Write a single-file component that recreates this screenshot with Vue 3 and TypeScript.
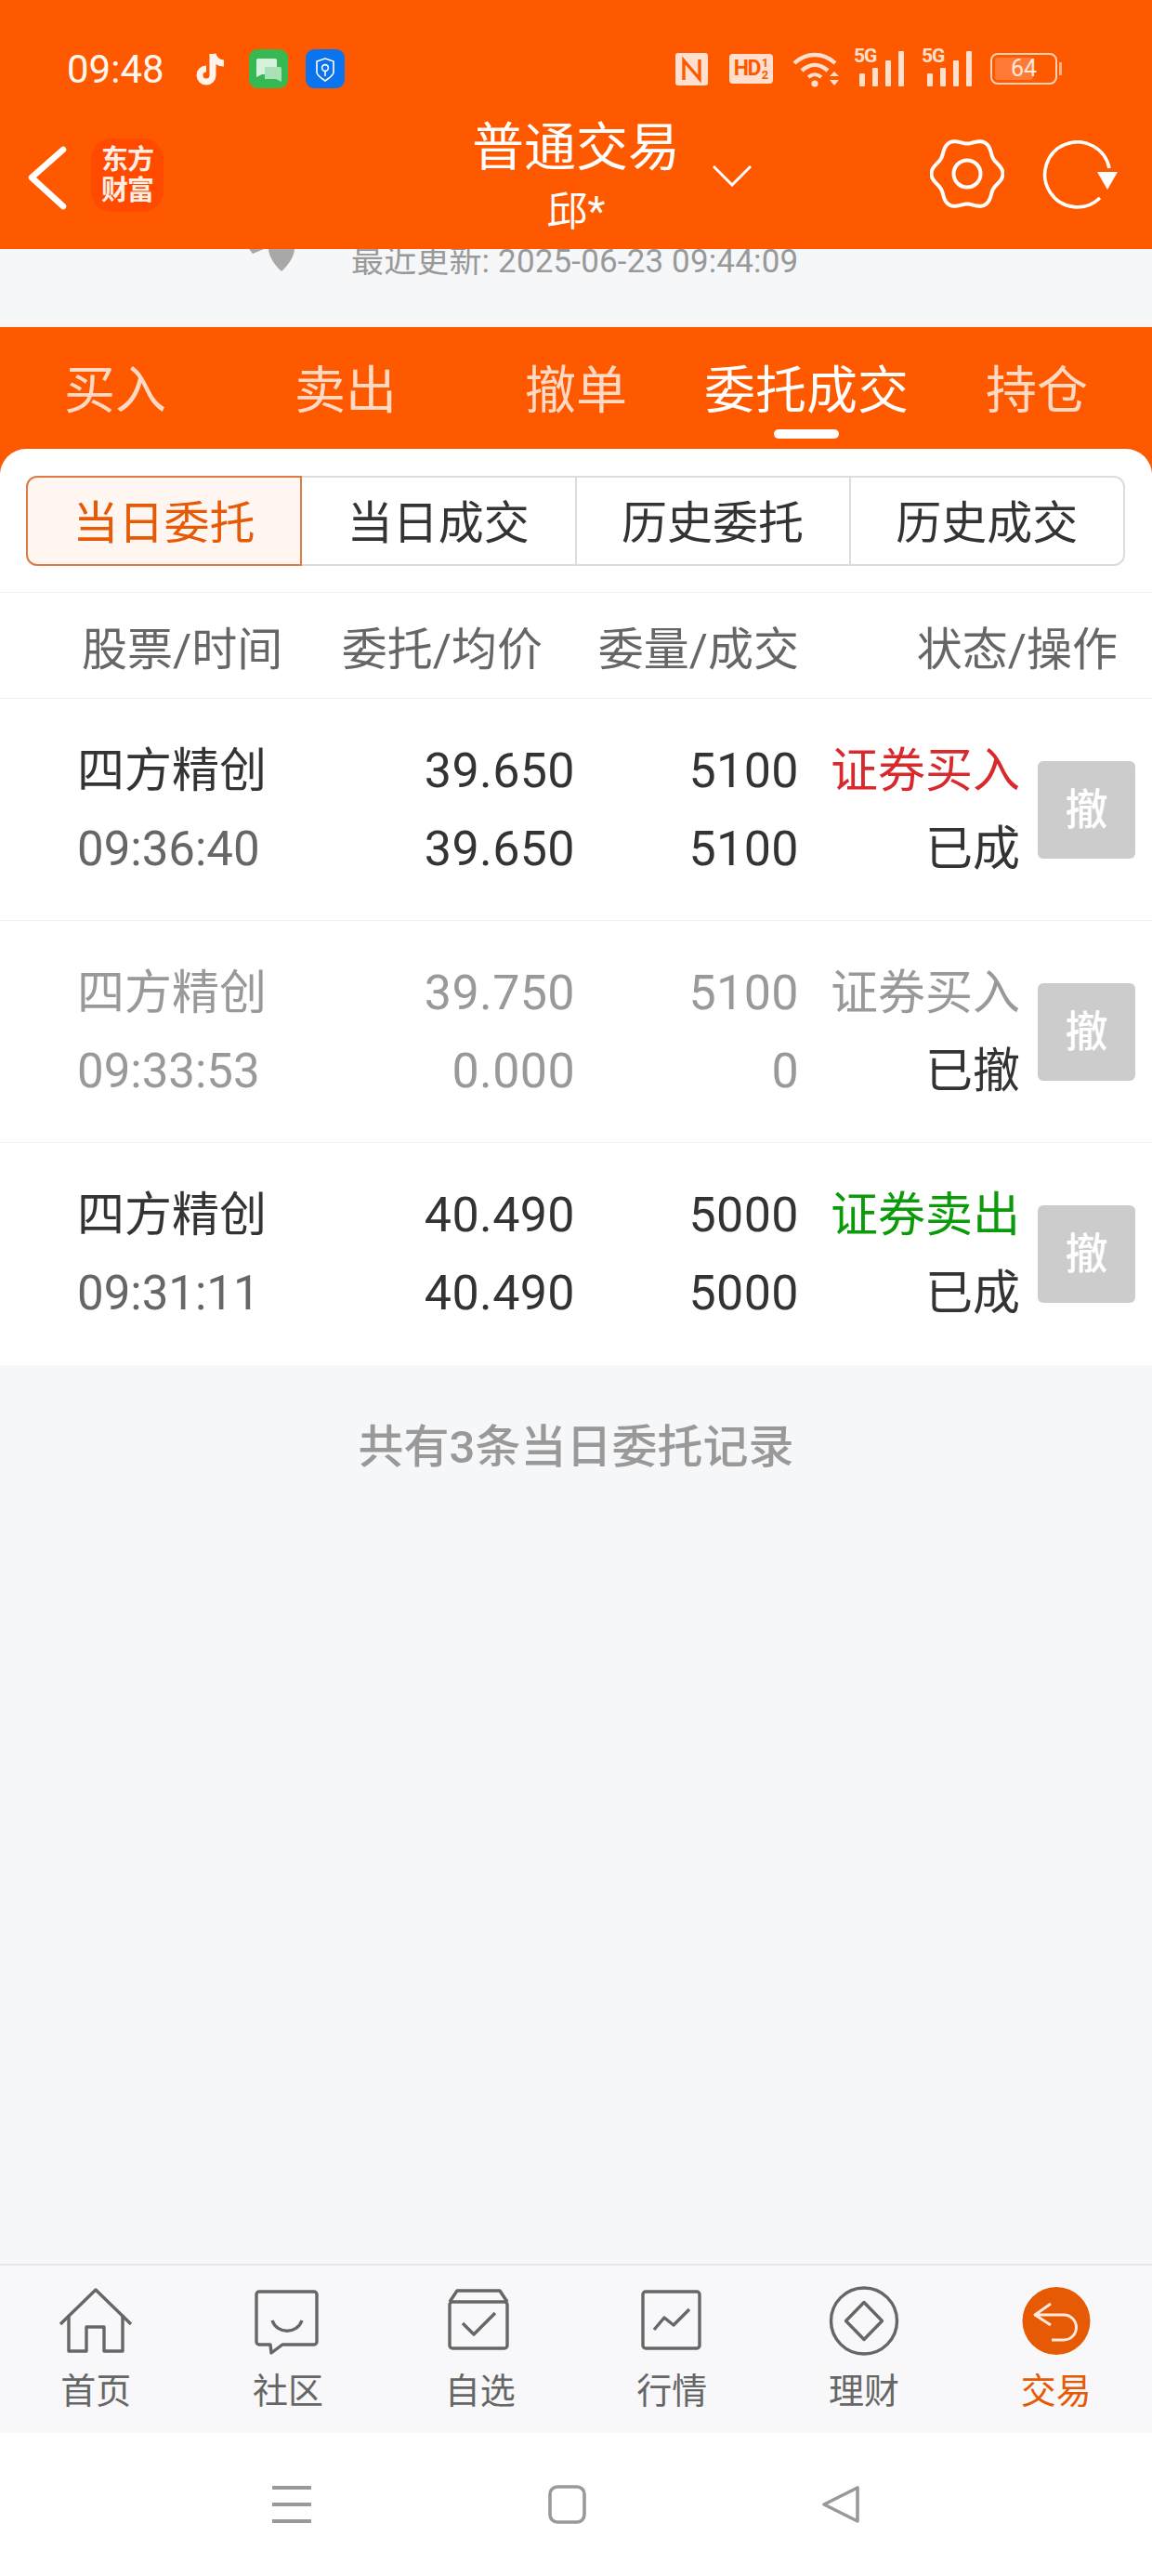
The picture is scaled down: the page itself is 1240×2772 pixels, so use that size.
<script setup lang="ts">
interface Order {
  name: string
  time: string
  price: string
  avg: string
  qty: string
  done: string
  side: string
  sideClass: string
  state: string
  muted?: boolean
}

const mainTabs = ['买入', '卖出', '撤单', '委托成交', '持仓']
const subTabs = ['当日委托', '当日成交', '历史委托', '历史成交']

const orders: Order[] = [
  { name: '四方精创', time: '09:36:40', price: '39.650', avg: '39.650', qty: '5100', done: '5100', side: '证券买入', sideClass: 'buy', state: '已成' },
  { name: '四方精创', time: '09:33:53', price: '39.750', avg: '0.000', qty: '5100', done: '0', side: '证券买入', sideClass: 'muted', state: '已撤', muted: true },
  { name: '四方精创', time: '09:31:11', price: '40.490', avg: '40.490', qty: '5000', done: '5000', side: '证券卖出', sideClass: 'sell', state: '已成' },
]

const navItems = ['首页', '社区', '自选', '行情', '理财', '交易']

// 齿轮外轮廓，6 个齿
function gearPath() {
  const pts: string[] = []
  for (let i = 0; i < 144; i++) {
    const a = (i / 144) * Math.PI * 2
    const r = 35.5 + 3 * Math.cos(6 * a)
    pts.push((40 + r * Math.cos(a)).toFixed(2) + ' ' + (40 + r * Math.sin(a)).toFixed(2))
  }
  return 'M' + pts.join('L') + 'Z'
}
const gear = gearPath()
</script>

<template>
  <div class="page">
    <header class="top">
      <div class="status">
        <span class="clock">09:48</span>
        <svg class="tiktok" width="34" height="38" viewBox="0 0 34 38">
          <path d="M19 3v23a7 7 0 1 1-7-7" fill="none" stroke="#fff3ec" stroke-width="7" />
          <path d="M19 3c1 6 6 10 12 10" fill="none" stroke="#fff3ec" stroke-width="7" />
        </svg>
        <svg class="app-green" width="42" height="42" viewBox="0 0 42 42">
          <rect width="42" height="42" rx="9" fill="#36b853" />
          <path d="M10 10h18a2 2 0 0 1 2 2v15H14l-6 3V12a2 2 0 0 1 2-2z" fill="#d7f2dc" />
          <path d="M17 19h16a2 2 0 0 1 2 2v14l-6-3H17z" fill="#a9e2b5" />
        </svg>
        <svg class="app-blue" width="42" height="42" viewBox="0 0 42 42">
          <rect width="42" height="42" rx="9" fill="#0a74ef" />
          <path d="M21 10l9 3v12c0 3-5 6-9 9-4-3-9-6-9-9V13z" fill="none" stroke="#fff" stroke-width="1.6" />
          <circle cx="21" cy="20" r="3.4" fill="none" stroke="#fff" stroke-width="1.6" />
          <path d="M21 23.5V29" stroke="#fff" stroke-width="1.6" />
        </svg>
        <div class="status-right">
          <svg width="35" height="35" viewBox="0 0 35 35">
            <rect width="35" height="35" rx="3" fill="#ffe0cf" />
            <path d="M9 29V8l17 20V7" fill="none" stroke="#ff5900" stroke-width="3.4" />
          </svg>
          <span class="hd"><b>HD</b><i><u>1</u><u>2</u></i></span>
          <svg class="wifi" width="52" height="40" viewBox="0 0 52 40">
            <path d="M2 14c13-12 31-12 44 0" fill="none" stroke="#ffe0cf" stroke-width="4.4" />
            <path d="M10 22c9-8 19-8 28 0" fill="none" stroke="#ffe0cf" stroke-width="4.4" />
            <path d="M17 29c5-4 9-4 14 0" fill="none" stroke="#ffe0cf" stroke-width="4" />
            <circle cx="24" cy="36" r="3.6" fill="#ffe0cf" />
            <path d="M40 28l5-5 5 5zM40 32l5 6 5-6z" fill="#ffe0cf" />
          </svg>
          <span v-for="n in 2" :key="n" class="signal">
            <em>5G</em>
            <svg width="52" height="38" viewBox="0 0 52 38">
              <rect x="4" y="24" width="6" height="14" rx="1" fill="#ffe0cf" />
              <rect x="18" y="18" width="6" height="20" rx="1" fill="#ffe0cf" />
              <rect x="32" y="10" width="6" height="28" rx="1" fill="#ffe0cf" />
              <rect x="46" y="0" width="6" height="38" rx="1" fill="#ffe0cf" />
            </svg>
          </span>
          <span class="battery"><span class="level" /><span class="num">64</span></span>
          <span class="nub" />
        </div>
      </div>
      <div class="bar">
        <svg class="back" width="46" height="70" viewBox="0 0 46 70">
          <path d="M40 4L6 34l34 31" fill="none" stroke="#fff" stroke-width="6.5" stroke-linecap="round" stroke-linejoin="round" />
        </svg>
        <div class="logo"><span>东方</span><span>财富</span></div>
        <div class="title">
          <div class="t1">普通交易</div>
          <div class="t2">邱*</div>
          <svg class="caret" width="42" height="24" viewBox="0 0 42 24">
            <path d="M1 2l20 20L41 2" fill="none" stroke="#fff" stroke-width="3" />
          </svg>
        </div>
        <svg class="gear" width="80" height="80" viewBox="0 0 80 80">
          <path :d="gear" fill="none" stroke="#fff" stroke-width="4" />
          <circle cx="40" cy="40" r="14.5" fill="none" stroke="#fff" stroke-width="4" />
        </svg>
        <svg class="reload" width="84" height="76" viewBox="0 0 84 76">
          <path d="M72 30A35 35 0 1 0 62 62" fill="none" stroke="#fff" stroke-width="3.6" />
          <path d="M59 34h22L70 53z" fill="#fff" />
        </svg>
      </div>
    </header>

    <div class="update">
      <svg class="pin" width="50" height="26" viewBox="0 0 50 26">
        <path d="M0 0h16l-12 5zM21 0h28c0 8-8 19-14 24C29 19 21 8 21 0z" fill="#a8a8a8" />
      </svg>
      <span>最近更新: 2025-06-23 09:44:09</span>
    </div>

    <nav class="main-tabs">
      <div v-for="t in mainTabs" :key="t" class="main-tab" :class="{ on: t === '委托成交' }">{{ t }}</div>
    </nav>

    <section class="card">
      <div class="sub-wrap">
        <div class="sub-tabs">
          <div v-for="(t, i) in subTabs" :key="t" class="sub-tab" :class="{ on: i === 0 }">{{ t }}</div>
        </div>
      </div>
      <div class="head">
        <span class="h1">股票/时间</span>
        <span class="h2">委托/均价</span>
        <span class="h3">委量/成交</span>
        <span class="h4">状态/操作</span>
      </div>
      <div v-for="o in orders" :key="o.time" class="row" :class="{ gray: o.muted }">
        <div class="col">
          <div class="name">{{ o.name }}</div>
          <div class="time">{{ o.time }}</div>
        </div>
        <div class="col num-col">
          <div>{{ o.price }}</div>
          <div>{{ o.avg }}</div>
        </div>
        <div class="col num-col">
          <div>{{ o.qty }}</div>
          <div>{{ o.done }}</div>
        </div>
        <div class="col num-col side-col">
          <div :class="o.sideClass">{{ o.side }}</div>
          <div class="state">{{ o.state }}</div>
        </div>
        <div class="cancel">撤</div>
      </div>
    </section>

    <div class="total">共有3条当日委托记录</div>

    <footer class="nav">
      <div v-for="(item, i) in navItems" :key="item" class="nav-item" :class="{ on: i === 5 }">
        <svg width="84" height="84" viewBox="0 0 84 84" fill="none" stroke="#666" stroke-width="3.4" stroke-linejoin="round">
          <template v-if="i === 0">
            <path d="M4 46L42 9l38 37" />
            <path d="M13 36v39h19V49h19v26h20V36" />
          </template>
          <template v-else-if="i === 1">
            <path d="M11 11h59a3 3 0 0 1 3 3v51a3 3 0 0 1-3 3H36L24 77l-1-9H11a3 3 0 0 1-3-3V14a3 3 0 0 1 3-3z" />
            <path d="M25 42c5 15 27 15 32 0" />
          </template>
          <template v-else-if="i === 2">
            <rect x="9" y="22" width="62" height="50" rx="3" />
            <path d="M9 22l8-12h46l8 12" />
            <path d="M23 45l12 12 23-23" />
          </template>
          <template v-else-if="i === 3">
            <rect x="11" y="11" width="61" height="61" rx="3" />
            <path d="M23 52l11-13 10 8 17-17" />
          </template>
          <template v-else-if="i === 4">
            <circle cx="42" cy="42.5" r="35.5" />
            <path d="M42 22.5L61.5 42.5 42 62.5 22.5 42.5z" />
          </template>
          <template v-else>
            <circle cx="42" cy="42.5" r="36.5" fill="#e65a05" stroke="none" />
            <path d="M36 24L19 36l17 11M19 36h31a13.5 13.5 0 0 1 0 27H37" stroke="#ffe9dc" stroke-width="3" />
          </template>
        </svg>
        <span>{{ item }}</span>
      </div>
    </footer>

    <div class="sys">
      <div class="sys-slot">
        <svg width="44" height="44" viewBox="0 0 44 44">
          <path d="M1 4h42M1 22h42M1 40h42" stroke="#999" stroke-width="4" />
        </svg>
      </div>
      <div class="sys-slot">
        <svg width="44" height="44" viewBox="0 0 44 44">
          <rect x="4" y="3" width="37" height="38" rx="8" fill="none" stroke="#999" stroke-width="3.6" />
        </svg>
      </div>
      <div class="sys-slot">
        <svg width="44" height="44" viewBox="0 0 44 44">
          <path d="M39 4v36L3 22z" fill="none" stroke="#999" stroke-width="3.6" stroke-linejoin="round" />
        </svg>
      </div>
    </div>
  </div>
</template>

<style>
html,
body {
  margin: 0;
  background: #f6f7f9;
}
</style>

<style scoped>
.page {
  width: 1240px;
  height: 2772px;
  display: flex;
  flex-direction: column;
  background: #f6f7f9;
  font-family: Roboto, "Noto Sans CJK SC", sans-serif;
  color: #333;
  overflow: hidden;
}

.top {
  height: 268px;
  background: #ff5900;
  color: #fff;
  flex: none;
  display: flex;
  flex-direction: column;
}

.status {
  height: 112px;
  display: flex;
  align-items: center;
  padding: 36px 0 0 72px;
  box-sizing: border-box;
}

.clock {
  font-size: 42px;
  font-weight: 400;
  width: 138px;
  color: #fff6f0;
}

.tiktok {
  margin-right: 24px;
}

.app-green {
  margin-right: 19px;
}

.status-right {
  margin-left: auto;
  padding-right: 97px;
  display: flex;
  align-items: center;
  color: #ffe0cf;
}

.hd {
  margin-left: 23px;
  width: 47px;
  height: 32px;
  background: #ffe0cf;
  border-radius: 4px;
  color: #ff5900;
  font-size: 23px;
  line-height: 32px;
  display: flex;
  justify-content: center;
  overflow: hidden;
}

.hd b {
  font-weight: 700;
  letter-spacing: -1.5px;
}

.hd i {
  font-style: normal;
  font-size: 13px;
  font-weight: 700;
  line-height: 13px;
  display: flex;
  flex-direction: column;
  margin: 3px 0 0 2px;
}

.hd u {
  text-decoration: none;
}

.wifi {
  margin-left: 21px;
}

.signal {
  margin-left: 16px;
  width: 53px;
  height: 38px;
  position: relative;
  display: block;
}

.signal + .signal {
  margin-left: 20px;
}

.signal svg {
  display: block;
}

.signal em {
  position: absolute;
  left: -2px;
  top: -7px;
  font-style: normal;
  font-size: 21px;
  font-weight: 700;
  line-height: 24px;
  letter-spacing: -1px;
}

.battery {
  margin-left: 19px;
  width: 72px;
  height: 34px;
  box-sizing: border-box;
  border: 2.5px solid #ffd2b8;
  border-radius: 8px;
  position: relative;
  display: block;
}

.level {
  position: absolute;
  left: 3px;
  top: 3px;
  bottom: 3px;
  width: 41px;
  background: #ff7a35;
  border-radius: 3px;
}

.num {
  position: absolute;
  left: 0;
  right: 0;
  top: 0;
  line-height: 29px;
  text-align: center;
  font-size: 25px;
  color: #ffe8db;
}

.nub {
  width: 3px;
  height: 14px;
  background: #ffb28a;
  margin-left: 2px;
}

.bar {
  flex: 1;
  position: relative;
  display: flex;
  align-items: flex-start;
}

.back {
  margin: 45px 0 0 28px;
}

.logo {
  margin: 37px 0 0 24px;
  width: 78px;
  height: 79px;
  background: #ff4a00;
  border-radius: 22px;
  display: flex;
  flex-direction: column;
  align-items: center;
  justify-content: center;
  font-size: 29px;
  font-weight: 700;
  line-height: 33px;
  letter-spacing: -1px;
  color: #ffeee5;
}

.title {
  position: absolute;
  left: 0;
  right: 0;
  top: 15px;
  text-align: center;
}

.t1 {
  font-size: 56px;
  line-height: 64px;
}

.t2 {
  font-size: 44px;
  line-height: 50px;
  margin-top: 12px;
  height: 44px;
}

.caret {
  position: absolute;
  left: 767px;
  top: 50px;
}

.gear {
  position: absolute;
  left: 1001px;
  top: 35px;
}

.reload {
  position: absolute;
  left: 1122px;
  top: 39px;
}

.update {
  height: 83px;
  flex: none;
  display: flex;
  align-items: flex-start;
  overflow: hidden;
  padding-left: 268px;
  font-size: 35px;
  color: #999;
  box-sizing: border-box;
}

.update span {
  margin: -10px 0 0 60px;
  line-height: 48px;
  white-space: nowrap;
  letter-spacing: 0.15px;
}

.pin {
  flex: none;
}

/* 橙色底延伸到卡片圆角后面 */
.main-tabs {
  height: 161px;
  margin-bottom: -28px;
  flex: none;
  background: #ff5900;
  display: flex;
  align-items: flex-start;
  border-top: 1px solid #fff0e8;
  box-sizing: border-box;
}

.main-tab {
  flex: 1;
  text-align: center;
  font-size: 55px;
  line-height: 136px;
  height: 132px;
  color: #ffd9c4;
  position: relative;
}

.main-tab.on {
  color: #fff;
}

.main-tab.on::after {
  content: "";
  position: absolute;
  left: 50%;
  top: 110px;
  width: 70px;
  height: 10px;
  margin-left: -35px;
  border-radius: 5px;
  background: #fff;
}

.card {
  background: #fff;
  margin-top: -1px;
  border-radius: 28px 28px 0 0;
  position: relative;
  flex: none;
}

.sub-wrap {
  padding: 29px 29px 28px 28px;
  border-bottom: 1px solid #f2f2f2;
}

.sub-tabs {
  display: flex;
  height: 97px;
  border: 2px solid #dcdcdc;
  border-left: none;
  border-radius: 12px;
  box-sizing: border-box;
}

.sub-tab {
  flex: 1;
  text-align: center;
  font-size: 49px;
  line-height: 100px;
  border-right: 2px solid #dcdcdc;
  height: 93px;
}

.sub-tab:last-child {
  border-right: none;
}

.sub-tab.on {
  margin: -2px 0;
  height: 97px;
  line-height: 100px;
  box-sizing: border-box;
  color: #e65a05;
  background: #fff6f1;
  border: 2px solid #dd7a45;
  border-radius: 12px 0 0 12px;
}

.head {
  height: 113px;
  display: grid;
  grid-template-columns: 88px 233px 263px 276px 1fr;
  align-items: center;
  font-size: 49px;
  color: #666;
  border-bottom: 1px solid #f0f0f0;
  white-space: nowrap;
}

.h1 {
  grid-column: 2;
  justify-self: start;
}

.h2 {
  grid-column: 3;
  justify-self: end;
}

.h3 {
  grid-column: 4;
  justify-self: end;
}

.h4 {
  grid-column: 5;
  justify-self: end;
  margin-right: 37px;
}

.row {
  height: 239px;
  box-sizing: border-box;
  padding-left: 83px;
  display: grid;
  grid-template-columns: 210px 326px 241px 238px 124px;
  align-items: center;
  border-bottom: 1px solid #f0f0f0;
  font-size: 52px;
}

.row:last-child {
  border-bottom: none;
}

.col {
  line-height: 84px;
  margin-top: 1px;
}

.num-col {
  text-align: right;
  letter-spacing: 0.4px;
}

.side-col {
  letter-spacing: 0;
  font-size: 51px;
}

.name {
  font-size: 51px;
}

.time {
  font-size: 51px;
  color: #666;
}

.gray .col:not(.side-col) {
  color: #999;
}

.gray .time {
  color: #999;
}

.buy {
  color: #d8292d;
}

.sell {
  color: #0a9a0a;
}

.muted {
  color: #999;
}

.cancel {
  justify-self: end;
  width: 105px;
  height: 105px;
  border-radius: 6px;
  background: #ccc;
  color: #fff;
  font-size: 46px;
  font-weight: 500;
  line-height: 105px;
  text-align: center;
}

.total {
  flex: 1;
  padding-top: 60px;
  text-align: center;
  font-size: 49px;
  line-height: 58px;
  font-weight: 500;
  color: #999;
}

.nav {
  height: 182px;
  flex: none;
  display: flex;
  background: #f8f8fa;
  border-top: 2px solid #e6e6e6;
  box-sizing: border-box;
}

.nav-item {
  flex: 1;
  display: flex;
  flex-direction: column;
  align-items: center;
  padding-top: 17px;
  font-size: 38px;
  line-height: 46px;
  color: #666;
}

.nav-item svg {
  display: block;
  margin-bottom: 11px;
}

.nav-item.on {
  color: #e65a05;
}

.sys {
  height: 154px;
  flex: none;
  background: #fff;
  display: flex;
  justify-content: center;
  align-items: center;
  padding: 0 20px 0 0;
}

.sys-slot {
  width: 296px;
  display: flex;
  justify-content: center;
}
</style>
